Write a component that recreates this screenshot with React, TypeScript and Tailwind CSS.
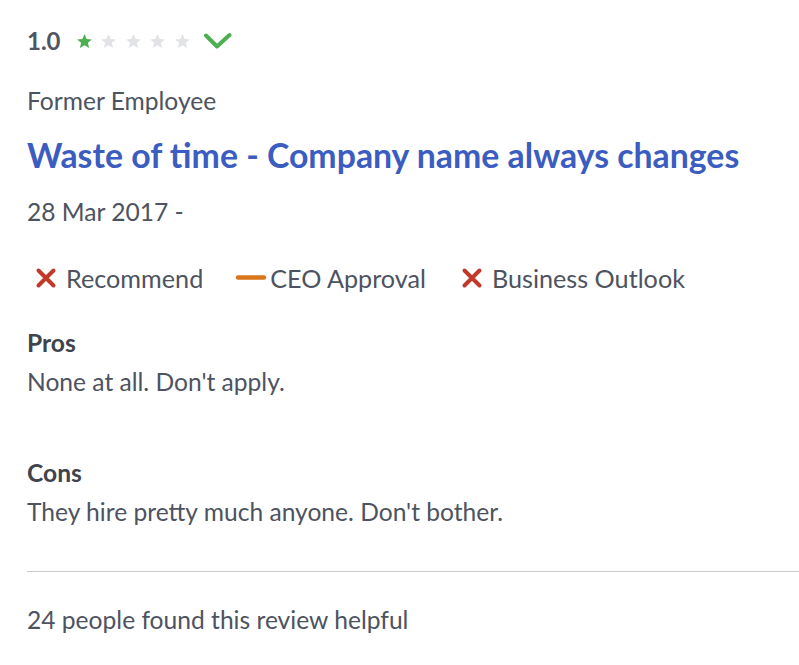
function XMark() {
  return (
    <svg width="22" height="22" viewBox="0 0 22 22" className="shrink-0">
      <path d="M3.5 3.5 L18.5 18.5 M18.5 3.5 L3.5 18.5" stroke="#c0392b" strokeWidth="4" strokeLinecap="round" />
    </svg>
  );
}

function Dash() {
  return (
    <svg width="32" height="22" viewBox="0 0 32 22" className="shrink-0">
      <path d="M3 10.5 L29 10.5" stroke="#d9761c" strokeWidth="4.4" strokeLinecap="round" />
    </svg>
  );
}

function StarIcon({ on }: { on: boolean }) {
  return (
    <svg width="17" height="17" viewBox="0 0 24 24">
      <path
        d="M12 1.5l3 6.9 7.4.6-5.6 4.9 1.7 7.3-6.5-3.9-6.5 3.9 1.7-7.3L1.6 9l7.4-.6z"
        fill={on ? '#4caf50' : '#e2e3e7'}
      />
    </svg>
  );
}

function App() {
  return (
    <div className="min-h-screen bg-white text-[#4d5360]" style={{ fontFamily: 'Lato, "Open Sans", sans-serif' }}>
      <div className="pl-[27px] pt-[26px]">
        {/* rating */}
        <div className="flex items-center h-[30px]">
          <span className="text-[24px] font-bold text-[#505661]">1.0</span>
          <div className="flex items-center gap-[7.5px] ml-[15px]">
            <StarIcon on />
            <StarIcon on={false} />
            <StarIcon on={false} />
            <StarIcon on={false} />
            <StarIcon on={false} />
          </div>
          <svg width="30" height="20" viewBox="0 0 30 20" className="ml-[12px]">
            <path d="M3 4.5 L14 15.5 L26.5 4" stroke="#4caf50" strokeWidth="4" fill="none" strokeLinecap="round" strokeLinejoin="round" />
          </svg>
        </div>

        <div className="mt-[29px] text-[24.6px] leading-[32px]">Former Employee</div>
        <h1 className="mt-[18px] text-[33.8px] leading-[40px] font-bold text-[#3b5cc0]">
          Waste of time - Company name always changes
        </h1>
        <div className="mt-[21px] text-[24.6px] leading-[32px]">28 Mar 2017 -</div>

        <div className="mt-[34px] flex items-center text-[25.2px] leading-[32px]">
          <div className="flex items-center gap-[9px] ml-[8px]">
            <XMark />
            <span>Recommend</span>
          </div>
          <div className="flex items-center gap-[3px] ml-[32px]">
            <Dash />
            <span>CEO Approval</span>
          </div>
          <div className="flex items-center gap-[9px] ml-[35px]">
            <XMark />
            <span>Business Outlook</span>
          </div>
        </div>

        <div className="mt-[33px] text-[24.6px] leading-[32px] font-bold text-[#3f444c]">Pros</div>
        <div className="mt-[7px] text-[24.6px] leading-[32px]">None at all. Don't apply.</div>

        <div className="mt-[59px] text-[24.6px] leading-[32px] font-bold text-[#3f444c]">Cons</div>
        <div className="mt-[7px] text-[24.6px] leading-[32px]">They hire pretty much anyone. Don't bother.</div>

        <div className="mt-[43px] border-t border-[#cccccc]" />

        <div className="mt-[32px] text-[24.6px] leading-[32px]">24 people found this review helpful</div>
      </div>
    </div>
  );
}

export default App;
